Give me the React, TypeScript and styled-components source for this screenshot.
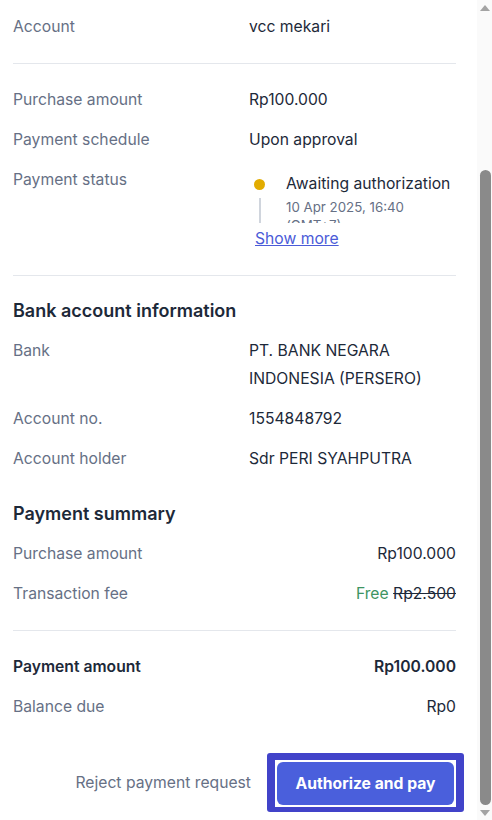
import { useLayoutEffect, useRef, useState } from 'react';
import styled, { createGlobalStyle } from 'styled-components';

const GlobalStyle = createGlobalStyle`
  html, body {
    margin: 0;
    padding: 0;
    background: #ffffff;
  }
  * {
    box-sizing: border-box;
  }
`;

const Frame = styled.div`
  display: flex;
  height: 100vh;
  font-family: Inter, 'Noto Sans', sans-serif;
  color: #1d2939;
`;

const Viewport = styled.div`
  flex: 1;
  min-width: 0;
  overflow: hidden;
`;

const Panel = styled.div`
  padding: 8px 21px 0 13px;
`;

/* drawn scrollbar, like the classic one in the screenshot */
const ScrollBar = styled.div`
  display: flex;
  flex-direction: column;
  width: 15px;
  flex-shrink: 0;
  background: #fafafa;
`;

const ArrowBox = styled.div`
  height: 15px;
  display: flex;
  align-items: center;
  justify-content: center;
  padding-left: 1px;
`;

const Track = styled.div`
  flex: 1;
  display: flex;
  flex-direction: column;
  align-items: center;
  padding-left: 1px;
`;

const Thumb = styled.div`
  width: 11px;
  border-radius: 6px;
  background: #8a8a8a;
`;

const Section = styled.section`
  padding-bottom: 16px;
`;

const SectionTitle = styled.h3`
  margin: 0;
  padding: 7px 0 8px;
  font-size: 18px;
  line-height: 24px;
  font-weight: 600;
  color: #1d2939;
`;

const Row = styled.div<{ $align?: 'left' | 'right' }>`
  display: grid;
  grid-template-columns: ${({ $align }) => ($align === 'right' ? '1fr auto' : '236px 1fr')};
  padding: 9px 0;
  font-size: 15.7px;
  line-height: 22px;
`;

const Label = styled.div<{ $strong?: boolean }>`
  color: ${({ $strong }) => ($strong ? '#1d2939' : '#667085')};
  font-weight: ${({ $strong }) => ($strong ? 600 : 400)};
`;

const Value = styled.div<{ $strong?: boolean; $tall?: boolean }>`
  color: #1d2939;
  font-weight: ${({ $strong }) => ($strong ? 600 : 400)};
  ${({ $tall }) => ($tall ? 'line-height: 28px; margin: -3px 0;' : '')}
`;

const Divider = styled.hr`
  border: none;
  border-top: 1px solid #e4e7ec;
  margin: 16px 0;
`;

const Timeline = styled.div`
  height: 54px;
  overflow: hidden;
  padding-top: 4px;
`;

const TimelineItem = styled.div`
  display: grid;
  grid-template-columns: 37px 1fr;
`;

const Marker = styled.div`
  position: relative;
  display: flex;
  justify-content: flex-start;
  padding-left: 5px;
  padding-top: 6px;

  &::after {
    content: '';
    position: absolute;
    left: 10px;
    top: 25px;
    bottom: -20px;
    width: 2px;
    background: #d0d5dd;
  }
`;

const Dot = styled.span`
  width: 11px;
  height: 11px;
  border-radius: 50%;
  background: #e2ac00;
`;

const StatusText = styled.div`
  font-size: 15.7px;
  line-height: 22px;
  color: #1d2939;
`;

const StatusDate = styled.div`
  margin-top: 3px;
  font-size: 13.3px;
  line-height: 18px;
  color: #667085;
`;

const ShowMore = styled.a`
  display: inline-block;
  margin-top: 5px;
  margin-left: 6px;
  font-size: 15.7px;
  line-height: 22px;
  color: #4b5bd8;
  text-decoration: underline;
  cursor: pointer;
`;

const Free = styled.span`
  color: #3d9462;
`;

const Strike = styled.span`
  text-decoration: line-through;
  color: #1d2939;
`;

const Footer = styled.div`
  display: flex;
  justify-content: flex-end;
  align-items: center;
  gap: 16px;
  padding: 26px 0 8px;
  margin-right: -8px;
`;

const RejectButton = styled.button`
  border: none;
  background: none;
  padding: 0;
  font-family: inherit;
  font-size: 15.7px;
  line-height: 22px;
  color: #667085;
  cursor: pointer;
`;

const FocusRing = styled.span`
  display: inline-flex;
  padding: 7px 8px 5px;
  border-radius: 3px;
  background: #4143c9;
`;

const FocusGap = styled.span`
  display: inline-flex;
  padding: 2px;
  background: #ffffff;
`;

const PayButton = styled.button`
  width: 177px;
  height: 43px;
  border: none;
  border-radius: 6px;
  background: #4a5fdc;
  color: #ffffff;
  font-family: inherit;
  font-size: 15.7px;
  font-weight: 700;
  cursor: pointer;
`;

function Triangle({ down }: { down?: boolean }) {
  return (
    <svg width="10" height="6" viewBox="0 0 10 6">
      <path d={down ? 'M0 0 H10 L5 6 Z' : 'M0 6 H10 L5 0 Z'} fill="#a3a3a3" />
    </svg>
  );
}

export default function App() {
  const viewRef = useRef<HTMLDivElement>(null);
  const [thumb, setThumb] = useState({ top: 0, size: 1 });

  useLayoutEffect(() => {
    const el = viewRef.current;
    if (!el) return;
    el.scrollTop = el.scrollHeight;
    setThumb({
      top: el.scrollTop / el.scrollHeight,
      size: el.clientHeight / el.scrollHeight,
    });
  }, []);

  return (
    <>
      <GlobalStyle />
      <Frame>
        <Viewport ref={viewRef}>
          <Panel>
            <SectionTitle>Payment request details</SectionTitle>
            <Row>
              <Label>Request no.</Label>
              <Value>PR/2025/04/0012</Value>
            </Row>
            <Row>
              <Label>Vendor</Label>
              <Value>PERI SYAHPUTRA</Value>
            </Row>
            <Row>
              <Label>Requested by</Label>
              <Value>vcc mekari</Value>
            </Row>
            <Row>
              <Label>Request date</Label>
              <Value>10 Apr 2025</Value>
            </Row>
            <Row>
              <Label>Account</Label>
              <Value>vcc mekari</Value>
            </Row>

            <Divider />

            <Row>
              <Label>Purchase amount</Label>
              <Value>Rp100.000</Value>
            </Row>
            <Row>
              <Label>Payment schedule</Label>
              <Value>Upon approval</Value>
            </Row>
            <Row>
              <Label>Payment status</Label>
              <div>
                <Timeline>
                  <TimelineItem>
                    <Marker>
                      <Dot />
                    </Marker>
                    <div>
                      <StatusText>Awaiting authorization</StatusText>
                      <StatusDate>10 Apr 2025, 16:40 (GMT+7)</StatusDate>
                    </div>
                  </TimelineItem>
                </Timeline>
                <ShowMore>Show more</ShowMore>
              </div>
            </Row>

            <Divider />

            <Section>
              <SectionTitle>Bank account information</SectionTitle>
              <Row>
                <Label>Bank</Label>
                <Value $tall>PT. BANK NEGARA INDONESIA (PERSERO)</Value>
              </Row>
              <Row>
                <Label>Account no.</Label>
                <Value>1554848792</Value>
              </Row>
              <Row>
                <Label>Account holder</Label>
                <Value>Sdr PERI SYAHPUTRA</Value>
              </Row>
            </Section>

            <SectionTitle>Payment summary</SectionTitle>
            <Row $align="right">
              <Label>Purchase amount</Label>
              <Value>Rp100.000</Value>
            </Row>
            <Row $align="right">
              <Label>Transaction fee</Label>
              <Value>
                <Free>Free</Free> <Strike>Rp2.500</Strike>
              </Value>
            </Row>

            <Divider />

            <Row $align="right">
              <Label $strong>Payment amount</Label>
              <Value $strong>Rp100.000</Value>
            </Row>
            <Row $align="right">
              <Label>Balance due</Label>
              <Value>Rp0</Value>
            </Row>

            <Footer>
              <RejectButton>Reject payment request</RejectButton>
              <FocusRing>
                <FocusGap>
                  <PayButton>Authorize and pay</PayButton>
                </FocusGap>
              </FocusRing>
            </Footer>
          </Panel>
        </Viewport>
        <ScrollBar>
          <ArrowBox>
            <Triangle />
          </ArrowBox>
          <Track>
            <div style={{ flexGrow: thumb.top }} />
            <Thumb style={{ flexGrow: thumb.size }} />
            <div style={{ flexGrow: Math.max(0, 1 - thumb.top - thumb.size) }} />
          </Track>
          <ArrowBox>
            <Triangle down />
          </ArrowBox>
        </ScrollBar>
      </Frame>
    </>
  );
}
